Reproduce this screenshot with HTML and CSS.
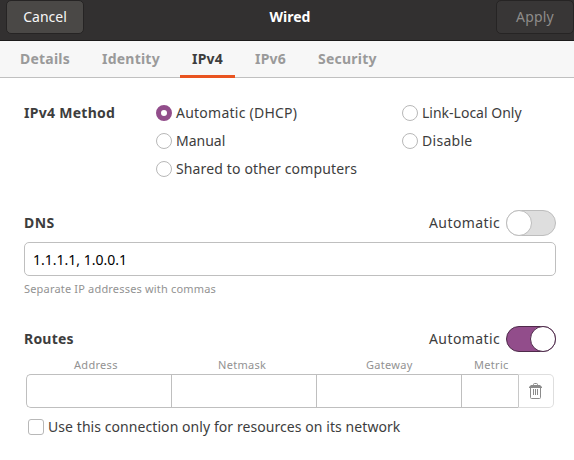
FILE: index.html
```html
<!DOCTYPE html>
<html lang="en">
<head>
<meta charset="utf-8">
<title>Wired</title>
<link rel="stylesheet" href="styles.css">
</head>
<body>
<div class="dialog">
  <header class="titlebar">
    <button class="btn btn-cancel">Cancel</button>
    <h1 class="title">Wired</h1>
    <button class="btn btn-apply" disabled>Apply</button>
  </header>
  <nav class="tabs">
    <a class="tab tab-details"><span>Details</span></a>
    <a class="tab tab-identity"><span>Identity</span></a>
    <a class="tab tab-ip active"><span>IPv4</span></a>
    <a class="tab tab-ip tab-ip6"><span>IPv6</span></a>
    <a class="tab tab-security"><span>Security</span></a>
  </nav>
  <main class="page">
    <section class="method">
      <h2 class="heading h-method"><span>IPv4 Method</span></h2>
      <div class="options">
        <label class="option"><i class="radio checked"></i><span class="t-auto">Automatic (DHCP)</span></label>
        <label class="option"><i class="radio"></i><span>Link-Local Only</span></label>
        <label class="option"><i class="radio"></i><span>Manual</span></label>
        <label class="option"><i class="radio"></i><span class="t-disable">Disable</span></label>
        <label class="option"><i class="radio"></i><span class="t-shared">Shared to other computers</span></label>
      </div>
    </section>
    <section class="dns">
      <div class="row">
        <h2 class="heading"><span class="t-dns">DNS</span></h2>
        <span class="toggle-label">Automatic</span>
        <span class="switch"><i class="knob"></i></span>
      </div>
      <div class="entry"><span>1.1.1.1, 1.0.0.1</span></div>
      <p class="hint"><span>Separate IP addresses with commas</span></p>
    </section>
    <section class="routes">
      <div class="row">
        <h2 class="heading"><span class="t-routes">Routes</span></h2>
        <span class="toggle-label">Automatic</span>
        <span class="switch on"><i class="knob"></i></span>
      </div>
      <div class="columns">
        <span class="c-address">Address</span><span class="c-netmask">Netmask</span><span class="c-gateway">Gateway</span><span class="c-metric">Metric</span>
      </div>
      <div class="cells">
        <div class="cell first"></div><div class="cell"></div><div class="cell"></div><div class="cell"></div>
        <div class="delete">
          <svg width="13" height="16" viewBox="0 0 13 16" fill="none" stroke="#8b8b8b">
            <path d="M4.5 2.5V1.5Q4.5 .5 5.5 .5H7.5Q8.5 .5 8.5 1.5V2.5"/>
            <path d="M2 2H11L13 4V5H0V4Z" fill="#8b8b8b" stroke="none"/>
            <path d="M1.5 5V14.5Q1.5 15.5 2.5 15.5H10.5Q11.5 15.5 11.5 14.5V5"/>
            <path d="M4.5 6V12M6.5 6V12M8.5 6V12"/>
          </svg>
        </div>
      </div>
      <label class="only"><i class="check"></i><span class="t-only">Use this connection only for resources on its network</span></label>
    </section>
  </main>
</div>
</body>
</html>
```
FILE: styles.css
```css
* { box-sizing: border-box; }
body {
  margin: 0;
  background: #fff;
  color: #3d3d3d;
  font: 14px/20px "Noto Sans", "Open Sans", sans-serif;
}
.dialog { width: 574px; height: 460px; overflow: hidden; }
span { white-space: nowrap; }
.titlebar {
  display: flex;
  justify-content: space-between;
  align-items: flex-start;
  height: 41px;
  padding-left: 6px;
  background: #323030;
  border-bottom: 1px solid #1c1b1b;
}
.btn {
  height: 34px;
  padding: 0;
  border: 1px solid #262424;
  border-radius: 5px;
  font: inherit;
}
.btn-cancel { width: 78px; background: #4a4846; color: #f7f7f7; }
.btn-apply { width: 78px; background: #383636; color: #8e8c8a; letter-spacing: .2px; }
.title {
  margin: 7px 0 0;
  font-size: 14px;
  line-height: 20px;
  color: #fff;
}
.tabs {
  display: flex;
  height: 37px;
  padding-left: 8px;
  background: #f7f7f7;
  border-bottom: 1px solid #c0c0c0;
  font-weight: bold;
  letter-spacing: .22px;
  color: #9a9a9a;
}
.tab { height: 37px; padding: 8px 0 0 12px; }
.tab-details { width: 82px; }
.tab-identity { width: 90px; }
.tab-ip { width: 55px; }
.tab-ip6 { width: 71px; padding-left: 20px; }
.tab-security { padding-left: 12px; }
.active { color: #3d3d3d; border-bottom: 3px solid #e95420; }
.page { padding: 25px 18px 0 24px; }
.method { display: flex; }
.heading { flex: 1; margin: 0; font-size: 14px; line-height: 20px; }
.h-method { flex: 0 0 132px; letter-spacing: .28px; }
.options { display: grid; grid-template-columns: 246px 1fr; grid-auto-rows: 20px; row-gap: 8px; }
.option { display: flex; align-items: center; gap: 4px; }
.t-auto { letter-spacing: .24px; }
.t-disable { letter-spacing: .28px; }
.t-shared { letter-spacing: .14px; }
.t-dns { letter-spacing: .4px; }
.t-routes { letter-spacing: .2px; }
.t-only { letter-spacing: .07px; }
.radio {
  flex: none;
  width: 16px;
  height: 16px;
  border: 1px solid #b8b8b8;
  border-radius: 50%;
  background: #fff;
}
.checked { border: 5px solid #924d8b; }
.dns { margin-top: 31px; }
.row { display: flex; align-items: center; height: 26px; }
.toggle-label { width: 77px; letter-spacing: .42px; }
.switch {
  width: 50px;
  height: 26px;
  border: 1px solid #bdbdbd;
  border-radius: 13px;
  background: #dedede;
}
.knob {
  display: block;
  width: 26px;
  height: 26px;
  margin: -1px;
  border: 1px solid #bdbdbd;
  border-radius: 50%;
  background: #fff;
}
.on { background: #924d8b; border-color: #4e2a4a; }
.on .knob { margin-left: 23px; border-color: #4e2a4a; }
.row, .entry { width: 532px; }
.entry {
  height: 34px;
  margin-top: 6px;
  padding: 7px 8px;
  border: 1px solid #bfbfbf;
  border-radius: 5px;
  color: #000;
}
.hint { margin: 5px 0 0; font-size: 11px; line-height: 16px; letter-spacing: .18px; color: #929292; }
.routes { margin-top: 29px; }
.columns {
  display: flex;
  margin: 5px 0 0 2px;
  height: 17px;
  font-size: 11px;
  line-height: 16px;
  letter-spacing: .3px;
  color: #929292;
}
.c-address { width: 144px; margin-left: 48px; }
.c-netmask { width: 148px; }
.c-gateway { width: 108px; }
.cells { display: flex; width: 528px; height: 34px; margin-left: 2px; }
.cell { width: 145px; border: 1px solid #bfbfbf; border-right: 0; }
.cell:nth-child(4) { width: 57px; }
.first { border-radius: 5px 0 0 5px; }
.delete {
  display: flex;
  align-items: center;
  width: 36px;
  padding-left: 10px;
  border: 1px solid #dedede;
  border-left-color: #c8c8c8;
  border-radius: 0 5px 5px 0;
}
.only { display: flex; align-items: center; gap: 4px; height: 20px; margin: 9px 0 0 4px; }
.check { width: 16px; height: 16px; border: 1px solid #b8b8b8; border-radius: 3px; }
```
